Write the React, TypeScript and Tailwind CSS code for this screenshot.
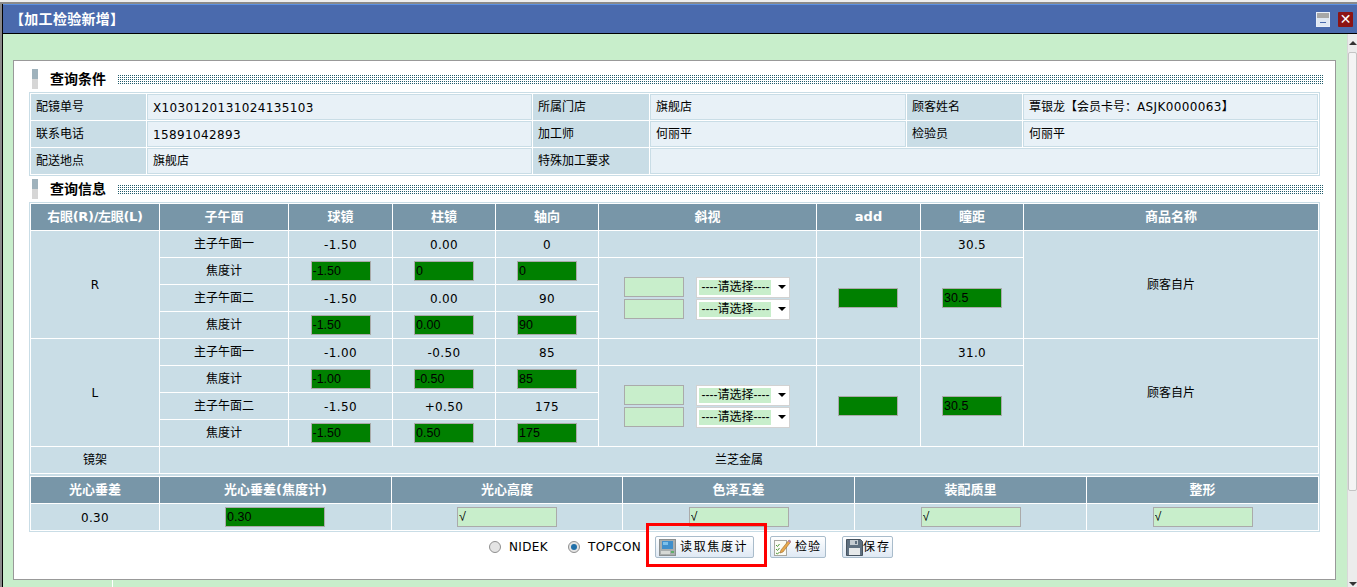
import type { ReactNode } from 'react';

const numFont = 'tracking-[0.37px]';
const cellNum = 'pt-px tracking-[0.37px]';
const headCell = 'h-[26px] bg-[#7896a8] p-0 text-center align-middle text-[13px] font-bold text-white';
const bodyCell = 'h-[26px] bg-[#c9dde6] p-0 text-center align-middle text-[12px] text-black';
const labelCell = 'h-[26px] bg-[#c9dde6] p-0 pl-[5px] text-left align-middle text-[12px] text-black';
const valueCell = 'h-[26px] border border-[#c9dde6] bg-[#e8f1f7] p-0 pl-[5px] text-left align-middle text-[12px] text-black';
const tableBase = 'w-[1291px] table-fixed border-separate border-spacing-[1px] border border-[#c9dde6]';

function Section({ title }: { title: string }) {
  return (
    <div className="flex h-5 items-center pl-[3px]">
      <div className="flex h-5 w-[6px] flex-col">
        <div className="h-[10px] bg-[#9fb2bc]" />
        <div className="h-[10px] bg-[#d6d6d6]" />
      </div>
      <div className="ml-3 w-[68px] text-[14px] font-bold leading-5 text-black">{title}</div>
      <div className="h-[11px] w-[1205px] bg-[repeating-linear-gradient(0deg,#ffffff_0_1px,transparent_1px_2px),repeating-linear-gradient(90deg,#1f5a6a_0_1px,#ffffff_1px_2px)]" />
    </div>
  );
}

function Field({ value = '', wide = false, green = true }: { value?: string; wide?: boolean; green?: boolean }) {
  return (
    <input
      readOnly
      defaultValue={value}
      className={`${wide ? 'w-[100px]' : 'w-[60px]'} h-5 border border-[#aaaaaa] pl-px align-middle font-['Liberation_Sans',sans-serif] text-[12.5px] text-black outline-none ${green ? 'bg-[#008000]' : 'bg-[#c8eecb]'}`}
    />
  );
}

function Choice() {
  return (
    <div className="flex h-[21px] w-[94px] items-center border border-[#d2d2d2] bg-white pl-[2px]">
      <div className="h-[15px] w-[72px] bg-[#c8eecb] pl-px font-['Liberation_Sans','Noto_Sans_CJK_SC',sans-serif] text-[12px] leading-[15px] text-black">
        ----请选择----
      </div>
      <div className="ml-[7px] h-0 w-0 border-x-[4px] border-t-[4px] border-x-transparent border-t-black" />
    </div>
  );
}

function Squint() {
  return (
    <div className="flex flex-col items-center gap-px pr-px">
      {[0, 1].map((i) => (
        <div key={i} className="flex items-center gap-3">
          <Field green={false} />
          <Choice />
        </div>
      ))}
    </div>
  );
}

type EyeData = {
  eye: string;
  first: string[];
  firstMeter: string[];
  second: string[];
  secondMeter: string[];
  pd: string;
  pdMeter: string;
};

const eyes: EyeData[] = [
  {
    eye: 'R',
    first: ['-1.50', '0.00', '0'],
    firstMeter: ['-1.50', '0', '0'],
    second: ['-1.50', '0.00', '90'],
    secondMeter: ['-1.50', '0.00', '90'],
    pd: '30.5',
    pdMeter: '30.5',
  },
  {
    eye: 'L',
    first: ['-1.00', '-0.50', '85'],
    firstMeter: ['-1.00', '-0.50', '85'],
    second: ['-1.50', '+0.50', '175'],
    secondMeter: ['-1.50', '0.50', '175'],
    pd: '31.0',
    pdMeter: '30.5',
  },
];

function EyeRows({ data }: { data: EyeData }) {
  const num = `${bodyCell} ${cellNum}`;
  return (
    <>
      <tr>
        <td rowSpan={4} className={`${bodyCell} ${numFont}`}>{data.eye}</td>
        <td className={bodyCell}>主子午面一</td>
        {data.first.map((v, i) => (
          <td key={i} className={num}>{v}</td>
        ))}
        <td className={bodyCell} />
        <td className={bodyCell} />
        <td className={num}>{data.pd}</td>
        <td rowSpan={4} className={bodyCell}>顾客自片</td>
      </tr>
      <tr>
        <td className={bodyCell}>焦度计</td>
        {data.firstMeter.map((v, i) => (
          <td key={i} className={bodyCell}><Field value={v} /></td>
        ))}
        <td rowSpan={3} className={bodyCell}><Squint /></td>
        <td rowSpan={3} className={`${bodyCell} pr-px`}><Field /></td>
        <td rowSpan={3} className={bodyCell}><Field value={data.pdMeter} /></td>
      </tr>
      <tr>
        <td className={bodyCell}>主子午面二</td>
        {data.second.map((v, i) => (
          <td key={i} className={num}>{v}</td>
        ))}
      </tr>
      <tr>
        <td className={bodyCell}>焦度计</td>
        {data.secondMeter.map((v, i) => (
          <td key={i} className={bodyCell}><Field value={v} /></td>
        ))}
      </tr>
    </>
  );
}

function Radio({ label, checked = false }: { label: string; checked?: boolean }) {
  return (
    <div className="flex items-center">
      <span className="flex size-3 items-center justify-center rounded-full border border-[#8f8f8f] bg-[#e4e4e4]">
        {checked && <span className="size-[6px] rounded-full bg-[#1f6fa8]" />}
      </span>
      <span className={`ml-2 text-[12px] text-black ${numFont}`}>{label}</span>
    </div>
  );
}

function ActionButton({ icon, label, className }: { icon: ReactNode; label: string; className: string }) {
  return (
    <button className={`flex h-[22px] items-center rounded-[2px] border border-[#a9bccb] bg-[linear-gradient(#ffffff,#dfe9f4)] pl-[3px] text-[12px] text-black ${className}`}>
      {icon}
      {label}
    </button>
  );
}

function ReaderIcon() {
  return (
    <svg width="17" height="17" viewBox="0 0 17 17" className="mr-1 shrink-0">
      <rect x="0.5" y="0.5" width="16" height="16" fill="#a9aeae" stroke="#8a8f90" />
      <rect x="3" y="2" width="11" height="8" fill="#3f8fcc" />
      <rect x="4" y="3" width="5" height="3" fill="#7cc0ea" />
      <rect x="2" y="12" width="9" height="3" fill="#d6d9d6" />
      <rect x="12" y="12" width="3" height="2" fill="#5fae6a" />
    </svg>
  );
}

function CheckIcon() {
  return (
    <svg width="17" height="18" viewBox="0 0 17 18" className="mr-1 shrink-0">
      <rect x="0.5" y="2.5" width="12" height="15" fill="#fbfbf4" stroke="#a8a8a0" />
      <path d="M2 7l1.5 1.5L5.5 6M2 11l1.5 1.5L5.5 10M2 15l1.5 1L5.5 14" fill="none" stroke="#4f9a3c" strokeWidth="1" />
      <path d="M7 12L15 2l2 1.5L9 14l-3 1z" fill="#e9a84a" stroke="#9a6a2c" strokeWidth="0.6" />
      <path d="M14 3.2L15 2l2 1.5-1 1.2z" fill="#b07cc0" />
    </svg>
  );
}

function DiskIcon() {
  return (
    <svg width="17" height="17" viewBox="0 0 17 17" className="shrink-0">
      <path d="M0.5 0.5h14l2 2v14h-16z" fill="#5f7080" stroke="#46535f" />
      <rect x="4" y="1" width="8" height="5" fill="#c4ccd2" />
      <rect x="9" y="2" width="2" height="3" fill="#5f7080" />
      <rect x="3" y="9" width="11" height="7" fill="#e6e9ea" />
    </svg>
  );
}

export default function App() {
  return (
    <div className="flex h-[587px] w-[1357px] flex-col overflow-hidden bg-[#e8e8e8] font-['DejaVu_Sans','Noto_Sans_CJK_SC',sans-serif]">
      <div className="h-[2px] shrink-0 bg-[#eeeeee]" />
      <div className="h-[2px] shrink-0 bg-[#8a8a8a]" />

      <div className="flex min-h-0 flex-1 border-l-2 border-[#8a8a8a]">
        <div className="flex min-w-0 flex-1 flex-col border-l border-black">
          <header className="flex h-[30px] shrink-0 items-center justify-between border-t border-b border-t-[#5a8fe0] border-b-black bg-[#4a6aad] pl-[7px] pr-[4px]">
            <h1 className="text-[14px] font-bold tracking-[0.3px] text-white">【加工检验新增】</h1>
            <div className="flex items-center gap-2">
              <div className="flex h-[15px] w-[14px] flex-col border border-[#e8eef8] bg-[#dfe7f2]">
                <div className="h-[5px] bg-[#a7a7a7]" />
                <div className="mx-auto mt-[4px] h-px w-[6px] bg-[#4a6aad]" />
              </div>
              <div className="flex h-[15px] w-[15px] items-center justify-center rounded-[1px] bg-[#8c1414] text-[14px] font-bold leading-none text-white">
                ✕
              </div>
            </div>
          </header>

          <div className="flex min-h-0 flex-1 bg-[#c8eecb]">
            <div className="flex min-w-0 flex-1 flex-col pl-[10px] pt-[26px]">
              <main className="h-[520px] w-[1323px] shrink-0 border border-[#999999] bg-white pl-[15px] pt-2">
                <Section title="查询条件" />
                <table className={`${tableBase} mt-[3px]`}>
                  <colgroup>
                    <col className="w-[115px]" />
                    <col className="w-[385px]" />
                    <col className="w-[116px]" />
                    <col className="w-[256px]" />
                    <col className="w-[115px]" />
                    <col className="w-[295px]" />
                  </colgroup>
                  <tbody>
                    <tr>
                      <td className={labelCell}>配镜单号</td>
                      <td className={`${valueCell} ${cellNum}`}>X1030120131024135103</td>
                      <td className={labelCell}>所属门店</td>
                      <td className={valueCell}>旗舰店</td>
                      <td className={labelCell}>顾客姓名</td>
                      <td className={valueCell}>
                        覃银龙【会员卡号：<span className={numFont}>ASJK0000063</span>】
                      </td>
                    </tr>
                    <tr>
                      <td className={labelCell}>联系电话</td>
                      <td className={`${valueCell} ${cellNum}`}>15891042893</td>
                      <td className={labelCell}>加工师</td>
                      <td className={valueCell}>何丽平</td>
                      <td className={labelCell}>检验员</td>
                      <td className={valueCell}>何丽平</td>
                    </tr>
                    <tr>
                      <td className={labelCell}>配送地点</td>
                      <td className={valueCell}>旗舰店</td>
                      <td className={labelCell}>特殊加工要求</td>
                      <td colSpan={3} className={valueCell} />
                    </tr>
                  </tbody>
                </table>

                <div className="mt-[3px]">
                  <Section title="查询信息" />
                </div>
                <table className={`${tableBase} mt-[3px]`}>
                  <colgroup>
                    <col className="w-[128px]" />
                    <col className="w-[128px]" />
                    <col className="w-[103px]" />
                    <col className="w-[102px]" />
                    <col className="w-[102px]" />
                    <col className="w-[217px]" />
                    <col className="w-[103px]" />
                    <col className="w-[102px]" />
                    <col className="w-[294px]" />
                  </colgroup>
                  <thead>
                    <tr>
                      <th className={`${headCell} tracking-[-0.3px]`}>右眼(R)/左眼(L)</th>
                      <th className={headCell}>子午面</th>
                      <th className={headCell}>球镜</th>
                      <th className={headCell}>柱镜</th>
                      <th className={headCell}>轴向</th>
                      <th className={headCell}>斜视</th>
                      <th className={`${headCell} text-[12px]`}>add</th>
                      <th className={headCell}>瞳距</th>
                      <th className={headCell}>商品名称</th>
                    </tr>
                  </thead>
                  <tbody>
                    {eyes.map((data) => (
                      <EyeRows key={data.eye} data={data} />
                    ))}
                    <tr>
                      <td className={bodyCell}>镜架</td>
                      <td colSpan={8} className={bodyCell}>兰芝金属</td>
                    </tr>
                  </tbody>
                </table>

                <table className={tableBase}>
                  <colgroup>
                    <col className="w-[128px]" />
                    <col className="w-[231px]" />
                    <col className="w-[230px]" />
                    <col className="w-[231px]" />
                    <col className="w-[231px]" />
                    <col className="w-[231px]" />
                  </colgroup>
                  <thead>
                    <tr>
                      {['光心垂差', '光心垂差(焦度计)', '光心高度', '色泽互差', '装配质里', '整形'].map((h) => (
                        <th key={h} className={headCell}>{h}</th>
                      ))}
                    </tr>
                  </thead>
                  <tbody>
                    <tr>
                      <td className={`${bodyCell} ${cellNum}`}>0.30</td>
                      <td className={`${bodyCell} pr-px`}><Field wide value="0.30" /></td>
                      {[0, 1, 2, 3].map((i) => (
                        <td key={i} className={bodyCell}><Field wide green={false} value="√" /></td>
                      ))}
                    </tr>
                  </tbody>
                </table>

                <div className="flex items-center pl-[460px] pt-[4px]">
                  <Radio label="NIDEK" />
                  <div className="ml-5">
                    <Radio label="TOPCON" checked />
                  </div>
                  <div className="relative ml-[14px]">
                    <ActionButton icon={<ReaderIcon />} label="读取焦度计" className="w-[99px] tracking-[1.6px]" />
                    <div className="absolute -left-[9px] -top-[13px] h-[44px] w-[121px] border-[3px] border-[#ff0000]" />
                  </div>
                  <ActionButton icon={<CheckIcon />} label="检验" className="ml-4 w-[56px] tracking-[1px]" />
                  <ActionButton icon={<DiskIcon />} label="保存" className="ml-4 w-[51px] tracking-[2px]" />
                </div>
              </main>
              <div className="h-2 w-[100px] shrink-0 border-r border-white" />
            </div>

            <aside className="flex w-[10px] shrink-0 flex-col border-l border-[#d8d8d8] bg-[#ececec]">
              <div className="flex h-[18px] shrink-0 items-center justify-center">
                <div className="h-0 w-0 border-x-[4px] border-b-[4px] border-x-transparent border-b-[#333333]" />
              </div>
              <div className="h-[439px] shrink-0 rounded-[2px] border border-[#c4c4c4] bg-[#f4f4f4]" />
              <div className="flex flex-1 items-end justify-center pb-[1px]">
                <div className="h-0 w-0 border-x-[4px] border-t-[4px] border-x-transparent border-t-[#333333]" />
              </div>
            </aside>
          </div>
        </div>
      </div>
    </div>
  );
}
